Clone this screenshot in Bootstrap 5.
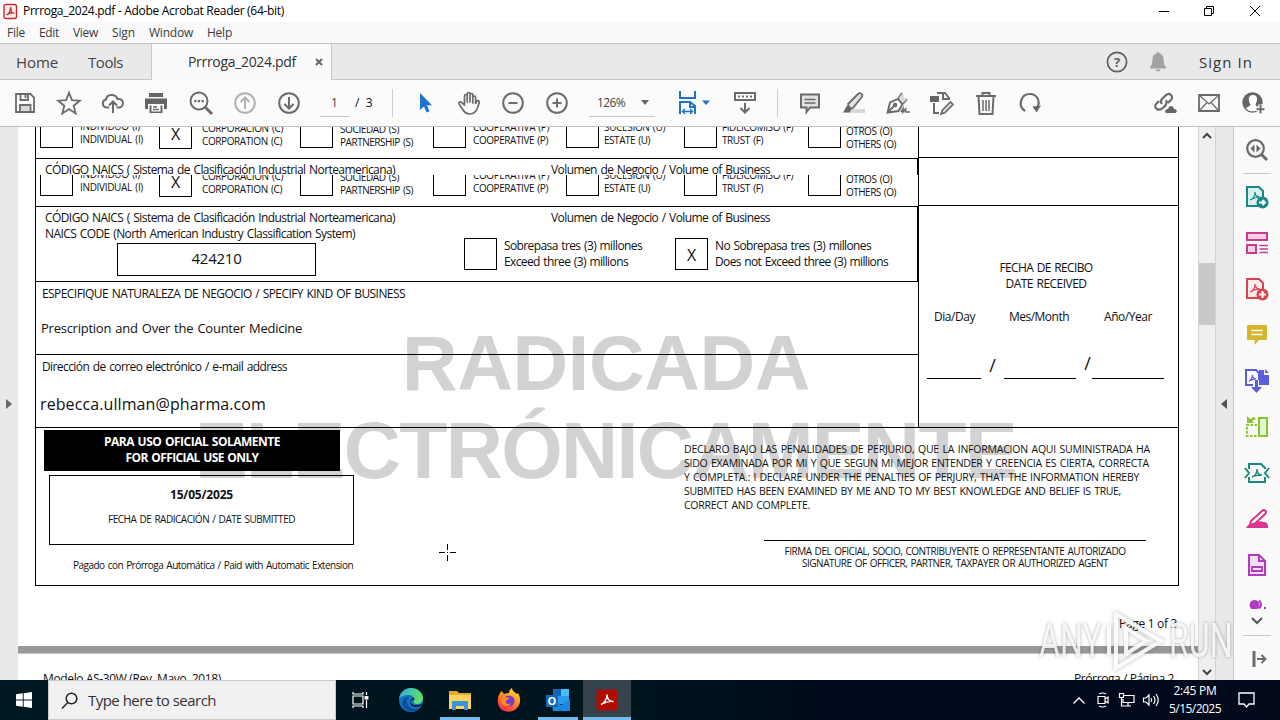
<!DOCTYPE html>
<html lang="en">
<head>
    <meta charset="UTF-8">
    <meta name="viewport" content="width=device-width, initial-scale=1.0">
    <title>Prrroga_2024.pdf - Adobe Acrobat Reader (64-bit)</title>

    <!-- Bootstrap CSS -->
    <link rel="stylesheet" href="https://cdn.jsdelivr.net/npm/bootstrap@5.3.0/dist/css/bootstrap.min.css">

    <style>
        body { width: 1280px; height: 720px; overflow: hidden; font-family: "Open Sans", "Noto Sans", sans-serif; font-size: 12px; line-height: 16px; color: #111; background: #fff; }
        svg { display: block; flex: none; overflow: visible; }
        .fit { display: inline-block; white-space: nowrap; }

        /* window chrome */
        .title-row { height: 22px; padding: 0 1px 0 3px; }
        .title-text { color: #000; margin-left: 5px; }
        .win-buttons { width: 138px; }
        .win-buttons > div { width: 45.5px; }
        .menu-row { height: 22px; background: #f9f9f9; border-bottom: 1px solid #c4c4c4; padding: 1px 0 0 7px; color: #3c3c3c; }
        .tab-row { height: 36px; background: #e9e9e9; border-bottom: 1px solid #c8c8c8; font-size: 15px; color: #444; }
        .doc-tab { width: 181px; height: 36px; background: #fafafa; border-left: 1px solid #c8c8c8; border-right: 1px solid #c8c8c8; font-size: 14px; color: #333; }
        .tool-row { height: 47px; background: #fbfbfb; border-bottom: 1px solid #c0c0c0; padding-left: 3px; }
        .tool { width: 44px; height: 46px; display: flex; align-items: center; justify-content: center; flex: none; }
        .tool svg, .side-tool svg { fill: none; stroke: #6b6b6b; stroke-width: 2; }
        .tool-sep { width: 1px; height: 28px; background: #cfcfcf; flex: none; }
        .field-line { border-bottom: 1px solid #c6c6c6; height: 27px; line-height: 26px; color: #444; }

        /* viewer */
        .viewer { height: 553px; }
        .gutter { width: 18px; background: #e9e9e9; }
        .sheet { width: 1180px; height: 553px; position: relative; overflow: hidden; padding-left: 17px; background: #fff; flex: none; }
        .form-area { position: relative; z-index: 1; width: 1144px; height: 459px; border: 1px solid #000; border-top: 0; word-spacing: 1px; }
        .form-top { height: 301px; border-bottom: 1px solid #000; }
        .form-left { width: 882px; }
        .form-right { width: 260px; border-left: 1px solid #000; }
        .form-foot { width: 318px; flex: none; }
        .stamp { position: absolute; font-family: "Liberation Sans", Arial, sans-serif; font-weight: 700; color: #d2d2d2; white-space: nowrap; line-height: 80px; }
        .stamp-a { left: 384px; top: 196px; font-size: 77px; }
        .stamp-b { left: 177px; top: 284px; font-size: 79px; }
        .entity-strip { height: 32px; border-bottom: 1px solid #000; overflow: hidden; display: grid; grid-template-columns: 119px 141px 133px 133px 118px 124px 1fr; align-items: end; align-content: end; padding-left: 4px; font-size: 10px; line-height: 13px; }
        .tick-box { border: 1px solid #000; width: 33px; height: 32px; line-height: 32px; font-size: 16px; text-align: center; flex: none; }
        .entity-strip .tick-box { height: 36px; line-height: 41px; }
        .naics-peek { height: 16px; overflow: hidden; border-right: 1px solid #000; padding-top: 3px; }
        .naics-row { height: 75px; border-bottom: 1px solid #000; border-right: 1px solid #000; padding-top: 3px; }
        .naics-left { width: 428px; padding-left: 9px; }
        .code-box { width: 199px; height: 33px; border: 1px solid #000; margin: 1px 0 0 72px; font-size: 15px; line-height: 29px; text-align: center; }
        .naics-title { padding-left: 87px; }
        .kind-row { height: 73px; border-bottom: 1px solid #000; padding: 4px 0 0 6px; }
        .mail-row { padding: 4px 0 0 6px; }
        .cell-a { height: 31px; border-bottom: 1px solid #000; }
        .cell-b { height: 48px; border-bottom: 1px solid #000; }
        .write-line { border-bottom: 1px solid #000; height: 24px; }
        .official { width: 296px; height: 41px; background: #000; color: #fff; font-weight: 700; margin: 2px 0 0 8px; padding-top: 4px; }
        .date-box { width: 305px; height: 70px; border: 1px solid #000; margin: 4px 0 0 13px; padding-top: 11px; }
        .declare { font-size: 10.500px; line-height: 14px; margin: 14px 0 0 330px; height: 98px; }
        .sign { width: 382px; border-top: 1px solid #000; margin-left: 410px; font-size: 10px; line-height: 12px; padding-top: 4px; }
        .page-gap { height: 8px; margin: 14px 0 0 -17px; background: #999; border-bottom: 1px solid #c4c4c4; }
        .crosshair { position: absolute; left: 421px; top: 417px; z-index: 2; }
        .scroll-track { width: 18px; background: #efefef; border-left: 1px solid #d4d4d4; border-right: 1px solid #d4d4d4; }
        .scroll-thumb { height: 62px; background: #c9c9c9; }
        .gutter-right { width: 17px; background: #e9e9e9; padding-right: 2px; }
        .side-panel { width: 47px; background: #fafafa; border-left: 1px solid #c8c8c8; }
        .side-tool { height: 46px; display: flex; align-items: center; justify-content: center; }
        .side-sep { width: 28px; height: 1px; background: #c8c8c8; margin: 0 auto; }

        /* video overlay mark */
        .overlay-mark { position: absolute; left: 1039px; top: 608px; z-index: 5; width: 192px; height: 66px; color: rgba(255,255,255,.85); font-family: Roboto, sans-serif; font-size: 48px; line-height: 66px; text-shadow: 0 0 4px rgba(0,0,0,.35); }
        .overlay-mark svg { filter: drop-shadow(0 0 2px rgba(0,0,0,.3)); }
        .mark-word { width: 62px; }
        .mark-word span { display: inline-block; transform: scaleX(.67); transform-origin: left; }

        /* taskbar */
        .task-row { height: 40px; background: linear-gradient(90deg, #001820 0, #00141d 50%, #000a1c 65%, #020a1c 100%); color: #fff; }
        .task-search { width: 288px; background: #f1f1f1; border: 1px solid #c9c9c9; color: #333; font-size: 15px; padding-left: 12px; }
        .task-app { width: 49px; display: flex; align-items: center; justify-content: center; border-bottom: 3px solid transparent; padding-top: 3px; }
        .task-app.active { background: #35444c; border-color: #76b9ed; width: 48px; margin-left: .500px; }
        .task-line { width: 40px; border-color: #76b9ed; margin: 0 4.500px; }
        .task-tray { width: 24px; }
        .task-clock { width: 64px; font-size: 12px; line-height: 18px; text-align: center; }

        /* spacing of single elements */
        .menu-row .fit + .fit { margin-left: 14px; }
        #tabTools { margin-left: 30px; }
        .doc-tab { margin-left: 28px; }
        #tabName { margin-left: 36px; }
        #tabRight { margin-left: auto; padding-right: 27px; }
        #bell { margin-left: 21px; }
        #signIn { margin-left: 32px; color: #333; }
        #pageNo { width: 29px; margin-left: 9px; }
        #pageAll { width: 20px; margin-left: 6px; font-size: 12px; }
        #sepA { margin-left: 17px; }
        #arrowTool { margin-left: 11px; }
        #arrowTool + .tool { margin-left: -1px; }
        #zoomField { width: 66px; margin-left: 10px; padding: 0 6px 0 8px; }
        #fitTool { margin-left: 17px; }
        #fitTool + .tool { margin-left: 7px; }
        #sepB { margin-left: 10px; }
        #noteTool { margin-left: 10px; }
        #userTool { margin-right: 5px; }
        #volumeRow { margin-top: 12px; }
        #volumeRow .tick-box:nth-child(3) { margin-left: 33px; }
        .vol-text { margin-left: 7px; width: 138px; }
        #kindValue { font-size: 13px; margin: 18px 0 0 -1px; }
        #mailValue { font-size: 16px; line-height: 22px; margin: 18px 0 0 -2px; }
        #received { padding: 54px 5px 0 0; }
        #dateNames { padding: 17px 0 0 15px; gap: 34px; }
        #dateNames .fit:last-child { margin-left: 1px; }
        #dateLines { margin: 30px 0 0 8px; }
        #dateLines .write-line:nth-child(1) { width: 54px; }
        #dateLines .write-line:nth-child(3) { width: 72px; }
        #dateLines .write-line:nth-child(5) { width: 72px; }
        #dateLines span { width: 23px; text-align: center; font-size: 18px; line-height: 20px; }
        #dateLines span:nth-child(4) { width: 16px; padding-left: 7px; line-height: 17px; }
        #submitted { font-size: 10px; margin-top: 8px; }
        #paid { font-size: 10px; margin: 12px 0 0 37px; }
        #pageOf { padding: 30px 21px 0 0; }
        #nextPage { padding: 17px 24px 0 8px; }
        #scrollUp { margin-top: 6px; }
        #scrollUp + .scroll-thumb { margin-top: 125px; }
        #cutTool { margin-top: 12px; height: 9px; overflow: hidden; }
        #sideMore { margin-top: 9px; }
        #sideSep { margin-top: 11px; }
        #startKey { width: 48px; height: 40px; }
        #startKey svg { stroke: none; }
        #searchText { margin-left: 10px; }
        #taskView { margin-right: 1px; }
        #tray { padding-right: 25px; }
        #notify { margin-left: 11px; }
    </style>
</head>
<body class="d-flex flex-column">

    <!-- Title bar -->
    <div class="title-row d-flex align-items-center flex-shrink-0">
        <svg width="15" height="17" viewBox="0 0 15 17"><rect x="1" y="1.500" width="12.500" height="14" rx="2" fill="#fff0ee" stroke="#c9252d" stroke-width="1.400"/><path d="M3.500 12c2-1 3.800-4 3.800-6.500 0-1.500 1-1.200.7.300-.6 2.200 1 4.200 3.500 4.500-2.500-.8-5.500 0-8 1.700z" fill="none" stroke="#c9252d" stroke-width="1.200"/></svg>
        <span class="fit title-text" data-w="261">Prrroga_2024.pdf - Adobe Acrobat Reader (64-bit)</span>
        <div class="win-buttons d-flex ms-auto">
            <div class="d-flex justify-content-center"><svg width="12" height="12" fill="none" stroke="#000"><path d="M1 6.500h10"/></svg></div>
            <div class="d-flex justify-content-center"><svg width="12" height="12" fill="none" stroke="#000"><path d="M1.500 3.500h7v7h-7zM3.500 3V1.500h7v7H9"/></svg></div>
            <div class="d-flex justify-content-center"><svg width="12" height="12" fill="none" stroke="#000"><path d="M1 1l10 10M11 1L1 11"/></svg></div>
        </div>
    </div>

    <!-- Menu -->
    <div class="menu-row d-flex align-items-center flex-shrink-0">
        <span class="fit" data-w="18">File</span>
        <span class="fit" data-w="20">Edit</span>
        <span class="fit" data-w="25">View</span>
        <span class="fit" data-w="23">Sign</span>
        <span class="fit" data-w="44">Window</span>
        <span class="fit" data-w="25">Help</span>
    </div>

    <!-- Tabs -->
    <div class="tab-row d-flex align-items-center flex-shrink-0">
        <span class="fit ms-3" data-w="42">Home</span>
        <span class="fit" data-w="35" id="tabTools">Tools</span>
        <div class="doc-tab d-flex align-items-center">
            <span class="fit" data-w="108" id="tabName">Prrroga_2024.pdf</span>
            <svg width="8" height="8" class="ms-auto me-2" fill="none" stroke="#666" stroke-width="2"><path d="M1 1l6 6M7 1L1 7"/></svg>
        </div>
        <div class="d-flex align-items-center" id="tabRight">
            <svg width="22" height="22" viewBox="0 0 22 22" fill="none" stroke="#5e5e5e" stroke-width="1.700"><circle cx="11" cy="11" r="9.600"/><text x="11" y="15.500" text-anchor="middle" font-size="13" font-weight="700" fill="#5e5e5e" stroke="none">?</text></svg>
            <svg width="18" height="20" viewBox="0 0 18 20" fill="#a2a2a2" id="bell"><path d="M9 0c1 0 1.600.7 1.600 1.600 3 .8 4 3.300 4 6.400 0 4 .8 5.500 2.400 7v1.500H1V15c1.600-1.500 2.400-3 2.400-7 0-3.100 1-5.600 4-6.400C7.400.7 8 0 9 0zM6.500 17.500h5c0 1.200-1 2-2.500 2s-2.500-.8-2.500-2z"/></svg>
            <span class="fit" data-w="54" id="signIn">Sign In</span>
        </div>
    </div>

    <!-- Toolbar -->
    <div class="tool-row d-flex align-items-center flex-shrink-0">
        <div class="tool"><svg width="22" height="22" viewBox="0 0 22 22"><path d="M7 14h8.500v5H7z" fill="#d9d9d9" stroke="none"/><path stroke-width="1.800" d="M2 2h14.500L20 5.500V20H2zM6.500 2v6H14V2M6 20v-7h10.500v7M11.500 3v3"/></svg></div>
        <div class="tool"><svg width="24" height="24" viewBox="0 0 24 24"><path stroke-width="1.800" d="M12 1.800l2.900 7.400 7.900.5-6.100 5 2 7.700-6.700-4.300-6.700 4.300 2-7.700-6.100-5 7.900-.5z"/></svg></div>
        <div class="tool"><svg width="24" height="22" viewBox="0 0 24 22"><path d="M8 15.500H5.500A4 4 0 0 1 5 7.600C5.500 2 14.500 1 16.500 7c7-.5 7 8 1.500 8.500h-2.500M12 21V10M8 13.500l4-4 4 4"/></svg></div>
        <div class="tool"><svg width="24" height="22" viewBox="0 0 24 22"><path d="M4 1h14v4H4zM0 6.500h22V17h-3v-5H3v5H0zM4.500 13.500h13V21h-13z" fill="#666" stroke="none"/><path d="M6.500 13h9v6.500h-9z" fill="#fff" stroke="none"/><path stroke-width="1.300" d="M8 15h4M8 17.500h6"/></svg></div>
        <div class="tool"><svg width="24" height="24" viewBox="0 0 24 24"><circle cx="10" cy="10" r="8.500"/><path stroke-width="3" d="M16 16l7 7"/><path d="M5.300 9h2.200v2.200H5.300zM8.900 9h2.200v2.200H8.900zM12.500 9h2.200v2.200h-2.200z" fill="#666" stroke="none"/></svg></div>
        <div class="tool opacity-50"><svg width="22" height="22" viewBox="0 0 22 22"><circle cx="11" cy="11" r="9.800"/><path d="M11 17V6M6.500 10L11 5.500l4.500 4.500"/></svg></div>
        <div class="tool"><svg width="22" height="22" viewBox="0 0 22 22"><circle cx="11" cy="11" r="9.800"/><path d="M11 5v11M6.500 12l4.500 4.500 4.500-4.500"/></svg></div>
        <div class="field-line text-center" id="pageNo">1</div>
        <span id="pageAll" class="fit">/&nbsp; 3</span>
        <div class="tool-sep" id="sepA"></div>
        <div class="tool" id="arrowTool"><svg width="14" height="20" viewBox="0 0 14 20"><path d="M1 0v17l4-3.500 2.500 6 3-1.200-2.500-6H13z" fill="#1f73d0" stroke="none"/></svg></div>
        <div class="tool"><svg width="24" height="24" viewBox="0 0 24 24"><path stroke-width="1.700" stroke-linejoin="round" d="M7.500 14V5c0-2 2.700-2 2.700 0v6V3c0-2 2.800-2 2.800 0v8V4c0-2 2.800-2 2.800 0v8V6.500c0-2 2.800-2 2.800 0v6l1.200-2c1-1.500 3-.8 2.500.8-.5 2-1.500 4.500-2 6-1.500 4-3.500 5.700-7.300 5.700-4.500 0-6.300-2.500-8-5.500L2.200 13c-1-1.800 1.200-2.800 2.500-1.500z"/></svg></div>
        <div class="tool"><svg width="22" height="22" viewBox="0 0 22 22"><circle cx="11" cy="11" r="9.800"/><path d="M6.500 11h9"/></svg></div>
        <div class="tool"><svg width="22" height="22" viewBox="0 0 22 22"><circle cx="11" cy="11" r="9.800"/><path d="M6.500 11h9M11 6.500v9"/></svg></div>
        <div class="field-line d-flex align-items-center" id="zoomField"><span class="fit" data-w="28">126%</span><svg class="ms-auto" width="8" height="5"><path d="M0 0h8L4 5z" fill="#666"/></svg></div>
        <div class="tool" id="fitTool"><svg width="32" height="24" viewBox="0 0 32 24"><path style="stroke:#1f73c8" d="M2 0v7h15V0M2 23V11h10l5 4v8M12 11v5h5"/><path style="stroke:#1f73c8" stroke-width="1.500" d="M5 20.500h9M7 18l-2.500 2.500L7 23M12 18l2.500 2.500L12 23"/><path d="M24 9.500h8L28 14z" fill="#1f73c8" stroke="none"/></svg></div>
        <div class="tool"><svg width="22" height="22" viewBox="0 0 22 22"><path d="M1 1h20v7H1zM11 11v9M6.500 16l4.500 4.500 4.500-4.500"/><path stroke-dasharray="2 2" d="M4 4.500h14"/></svg></div>
        <div class="tool-sep" id="sepB"></div>
        <div class="tool" id="noteTool"><svg width="22" height="22" viewBox="0 0 22 22"><path fill="#e2e2e2" d="M2 2.500h18v13h-9L7.500 20v-4.500H2z"/><path stroke-width="1.500" d="M5.500 7.500h11M5.500 11h11"/></svg></div>
        <div class="tool"><svg width="24" height="22" viewBox="0 0 24 22"><path d="M10 17h13v4H4z" fill="#d8d8d8" stroke="none"/><path fill="#e2e2e2" stroke-width="1.800" d="M6 12L16 2c2-2 5.500 0 3.800 3L11 16c-2 1-5-1-5-4z"/><path d="M5 13.500l4.500 4-2 3H1z" fill="#666" stroke="none"/></svg></div>
        <div class="tool"><svg width="24" height="22" viewBox="0 0 24 22"><path stroke-width="1.900" d="M1.500 20.500L4 10.500l8-3.500 4.500 5-4 7zM1.500 20.500l6-6M12 7l4-6M16.500 12L21 7"/><path d="M13 5.500L17 1l1 5 3 1-4 4z" fill="#d8d8d8" stroke="none"/><circle cx="9" cy="13" r="1.300"/><path stroke-width="1.600" d="M15 20l2-3.500v3.500l2.500-3v3H24"/></svg></div>
        <div class="tool"><svg width="24" height="23" viewBox="0 0 24 23"><path d="M4 11v10h5M7 1h8l4 5v2M13 1v6h6"/><path d="M0 4h9v6H0z" fill="#666" stroke="none"/><path fill="#e2e2e2" stroke-width="1.700" d="M11 22l1.500-4 8-8 2.500 2.500-8 8z"/></svg></div>
        <div class="tool"><svg width="20" height="23" viewBox="0 0 20 23"><path d="M0 4h20M6.500 3.500V1h7v2.500M2.500 4.500l1 17.500h13l1-17.500"/><path stroke-width="1.500" d="M7 8v11M10 8v11M13 8v11"/></svg></div>
        <div class="tool"><svg width="22" height="22" viewBox="0 0 22 22"><path stroke-width="2.200" d="M6 19C-1.500 14 1.500 2 11 2c7 0 10.500 7 7.500 13"/><path d="M13.500 14.500l8.500-1-4.500 7z" fill="#666" stroke="none"/></svg></div>
        <div class="tool ms-auto"><svg width="24" height="22" viewBox="0 0 24 22"><path stroke-width="2.200" d="M9 12c-3-3 1-6 3-8s4-3 6-1 1 4-1 6l-2 2M13 8c2 3 0 5-2 7s-4 4-7 2-2-4 0-6l2-2"/><path d="M13 21c-2-2 0-4 2-4 1-4 5-4 6 0 4 0 3 4 1 4z" fill="#666" stroke="none"/></svg></div>
        <div class="tool"><svg width="22" height="18" viewBox="0 0 22 18"><path stroke-width="1.800" d="M1 1h20v16H1z"/><path stroke-width="1.300" d="M2 2l9 8 9-8M2 16l7-7.500M20 16l-7-7.500"/></svg></div>
        <div class="tool" id="userTool"><svg width="22" height="22" viewBox="0 0 22 22"><circle cx="10.500" cy="10.500" r="10.200" fill="#666" stroke="none"/><path d="M11 3c3 0 4.300 2 4 4.800-.2 2.500-1.200 3.500-1.500 4.700 0 2 3.500 2 4 4-3.500 3.500-10 4-13.500 0 1-2 4.500-2 4.500-4-.5-1-1.500-2.200-1.700-4.700C6.500 5 8 3 11 3z" fill="#fff" stroke="none"/><path style="stroke:#fff" stroke-width="4.500" d="M18.500 12.500v9M14 17h9"/><path d="M18.500 13v8.500M14.500 17.200h8"/></svg></div>
    </div>

    <!-- Viewer -->
    <div class="viewer d-flex flex-shrink-0">
        <div class="gutter d-flex align-items-center justify-content-center"><svg width="6" height="10"><path d="M0 0v10l6-5z" fill="#666"/></svg></div>
        <div class="sheet">
            <div class="stamp stamp-a"><span class="fit" data-w="408">RADICADA</span></div>
            <div class="stamp stamp-b"><span class="fit" data-w="821">ELECTRÓNICAMENTE</span></div>

            <div class="form-area">
                <div class="form-top d-flex">
                    <div class="form-left">
                        <div class="entity-strip"></div>
                        <div class="naics-peek d-flex">
                            <div class="naics-left"><span class="fit" data-w="350">CÓDIGO NAICS ( Sistema de Clasificación Industrial Norteamericana)</span></div>
                            <div class="naics-title"><span class="fit" data-w="219">Volumen de Negocio / Volume of Business</span></div>
                        </div>
                        <div class="entity-strip"></div>
                        <div class="naics-row d-flex">
                            <div class="naics-left">
                                <div><span class="fit" data-w="350">CÓDIGO NAICS ( Sistema de Clasificación Industrial Norteamericana)</span></div>
                                <div><span class="fit" data-w="310">NAICS CODE (North American Industry Classification System)</span></div>
                                <div class="code-box"><span class="fit" data-w="50">424210</span></div>
                            </div>
                            <div>
                                <div class="naics-title"><span class="fit" data-w="219">Volumen de Negocio / Volume of Business</span></div>
                                <div class="d-flex" id="volumeRow">
                                    <div class="tick-box"></div>
                                    <div class="vol-text"><div><span class="fit" data-w="138">Sobrepasa tres (3) millones</span></div><div><span class="fit" data-w="124">Exceed three (3) millions</span></div></div>
                                    <div class="tick-box">X</div>
                                    <div class="vol-text"><div><span class="fit" data-w="156">No Sobrepasa tres (3) millones</span></div><div><span class="fit" data-w="173">Does not Exceed three (3) millions</span></div></div>
                                </div>
                            </div>
                        </div>
                        <div class="kind-row">
                            <div><span class="fit" data-w="363">ESPECIFIQUE NATURALEZA DE NEGOCIO / SPECIFY KIND OF BUSINESS</span></div>
                            <div id="kindValue"><span class="fit" data-w="261">Prescription and Over the Counter Medicine</span></div>
                        </div>
                        <div class="mail-row">
                            <div><span class="fit" data-w="245">Dirección de correo electrónico / e-mail address</span></div>
                            <div id="mailValue"><span class="fit" data-w="226">rebecca.ullman@pharma.com</span></div>
                        </div>
                    </div>
                    <div class="form-right">
                        <div class="cell-a"></div>
                        <div class="cell-b"></div>
                        <div class="text-center" id="received">
                            <div><span class="fit" data-w="93">FECHA DE RECIBO</span></div>
                            <div><span class="fit" data-w="81">DATE RECEIVED</span></div>
                        </div>
                        <div class="d-flex" id="dateNames">
                            <span class="fit" data-w="41">Dia/Day</span>
                            <span class="fit" data-w="60">Mes/Month</span>
                            <span class="fit" data-w="48">Año/Year</span>
                        </div>
                        <div class="d-flex" id="dateLines">
                            <div class="write-line"></div><span>/</span><div class="write-line"></div><span>/</span><div class="write-line"></div>
                        </div>
                    </div>
                </div>
                <div class="d-flex">
                    <div class="form-foot">
                        <div class="official text-center">
                            <div><span class="fit" data-w="176">PARA USO OFICIAL SOLAMENTE</span></div>
                            <div><span class="fit" data-w="133">FOR OFFICIAL USE ONLY</span></div>
                        </div>
                        <div class="date-box text-center">
                            <div class="fw-bold"><span class="fit" data-w="63">15/05/2025</span></div>
                            <div id="submitted"><span class="fit" data-w="187">FECHA DE RADICACIÓN / DATE SUBMITTED</span></div>
                        </div>
                        <div id="paid"><span class="fit" data-w="280">Pagado con Prórroga Automática / Paid with Automatic Extension</span></div>
                    </div>
                    <div>
                        <div class="declare">
                            <div><span class="fit" data-w="466">DECLARO BAJO LAS PENALIDADES DE PERJURIO, QUE LA INFORMACION AQUI SUMINISTRADA HA</span></div>
                            <div><span class="fit" data-w="465">SIDO EXAMINADA POR MI Y QUE SEGUN MI MEJOR ENTENDER Y CREENCIA ES CIERTA, CORRECTA</span></div>
                            <div><span class="fit" data-w="455">Y COMPLETA.: I DECLARE UNDER THE PENALTIES OF PERJURY, THAT THE INFORMATION HEREBY</span></div>
                            <div><span class="fit" data-w="437">SUBMITED HAS BEEN EXAMINED BY ME AND TO MY BEST KNOWLEDGE AND BELIEF IS TRUE,</span></div>
                            <div><span class="fit" data-w="126">CORRECT AND COMPLETE.</span></div>
                        </div>
                        <div class="sign text-center">
                            <div><span class="fit" data-w="341">FIRMA DEL OFICIAL, SOCIO, CONTRIBUYENTE O REPRESENTANTE AUTORIZADO</span></div>
                            <div><span class="fit" data-w="306">SIGNATURE OF OFFICER, PARTNER, TAXPAYER OR AUTHORIZED AGENT</span></div>
                        </div>
                    </div>
                </div>
            </div>
            <div class="text-end" id="pageOf"><span class="fit" data-w="58">Page 1 of 3</span></div>
            <div class="page-gap"></div>
            <div class="d-flex justify-content-between" id="nextPage">
                <span class="fit" data-w="178">Modelo AS-30W (Rev. Mayo, 2018)</span>
                <span class="fit" data-w="100">Prórroga / Página 2</span>
            </div>
            <svg class="crosshair" width="17" height="17" stroke="#000" stroke-width="1"><path d="M0 8.500h6M11 8.500h6M8.500 0v6M8.500 11v6M8 8.500h1"/></svg>
        </div>
        <div class="scroll-track d-flex flex-column">
            <svg class="mx-auto" width="8" height="5" fill="none" stroke="#444" stroke-width="2" id="scrollUp"><path d="M0 5l4-4 4 4"/></svg>
            <div class="scroll-thumb"></div>
            <svg class="mx-auto mt-auto mb-1" width="8" height="6" fill="none" stroke="#444" stroke-width="2"><path d="M0 0l4 4 4-4"/></svg>
        </div>
        <div class="gutter-right d-flex align-items-center justify-content-center"><svg width="6" height="10"><path d="M6 0v10L0 5z" fill="#555"/></svg></div>
        <div class="side-panel">
            <div class="side-tool"><svg width="22" height="22" viewBox="0 0 22 22"><circle cx="9.500" cy="9.500" r="8.300" stroke-width="2.200"/><path stroke-width="3" d="M15.500 15.500L21 21"/><path d="M8.500 5.500v8l-4-4zM10.500 5.500v8l4-4z" fill="#666" stroke="none"/></svg></div>
            <div class="side-sep"></div>
            <div class="side-tool"><svg width="24" height="24" viewBox="0 0 24 24"><path style="stroke:#168a82" fill="#d8f2f0" d="M2 2h12l4 4v15H2z"/><path style="stroke:#168a82" stroke-width="1.200" d="M5 15c3-1 5-4 5-8 0 4 2 5 5 5-4 0-7 1-10 3z"/><circle cx="17.500" cy="17.500" r="6" fill="#168a82" stroke="none"/><path style="stroke:#fff" d="M14 17.500h6M17.500 15l2.500 2.500-2.500 2.500"/></svg></div>
            <div class="side-tool"><svg width="22" height="22" viewBox="0 0 22 22"><path style="stroke:#c83c8e" fill="#f7cfe6" d="M1 1h20v7H1zM1 13h9v8H1z"/><path style="stroke:#c83c8e" stroke-width="1.300" d="M13.500 13.500H22M13.500 17H22M13.500 20.500H22"/></svg></div>
            <div class="side-tool"><svg width="24" height="24" viewBox="0 0 24 24"><path style="stroke:#d7444d" fill="#fdebe9" d="M2 2h12l4 4v15H2z"/><path style="stroke:#d7444d" stroke-width="1.200" d="M5 15c3-1 5-4 5-8 0 4 2 5 5 5-4 0-7 1-10 3z"/><circle cx="17.500" cy="17.500" r="6" fill="#d7444d" stroke="none"/><path style="stroke:#fff" d="M14 17.500h7M17.500 14v7"/></svg></div>
            <div class="side-tool"><svg width="20" height="20" viewBox="0 0 20 20"><path d="M1 0h18q1 0 1 1v13q0 1-1 1h-7l-4.500 5v-5H1q-1 0-1-1V1q0-1 1-1z" fill="#d6b62c" stroke="none"/><path style="stroke:#fff" stroke-width="1.600" d="M4.500 5.500h11M4.500 9.500h11"/></svg></div>
            <div class="side-tool"><svg width="24" height="24" viewBox="0 0 24 24"><path style="stroke:#5c5ce0" d="M8 16H1V1h10l3 3v7"/><path style="stroke:#5c5ce0" stroke-width="1.200" d="M4 12c2-1 3.500-3 3.500-6 0 3 1.500 4 3.500 4-3 0-5 1-7 2z"/><path d="M14 1h5v5h5v10H14zM20 0l4 4h-4zM10 11h3v7h4l-5.500 6L6 18h4z" fill="#5c5ce0" stroke="none"/></svg></div>
            <div class="side-tool"><svg width="22" height="22" viewBox="0 0 22 22"><path style="stroke:#86c232" fill="#e6f5d2" d="M13 2h8v18h-8z"/><path style="stroke:#86c232" stroke-dasharray="2.500 1.500" d="M11 9H1v11h10"/><path d="M1 0v7h7L6 5l4-2-2-2-4 2z" fill="#86c232" stroke="none"/></svg></div>
            <div class="side-tool"><svg width="24" height="22" viewBox="0 0 24 22"><path style="stroke:#168a82" d="M4 7V2h12l4 4v1M4 15v5h16v-5M0 6l4 5-4 5M24 6l-4 5 4 5"/><path style="stroke:#168a82" stroke-width="1.400" d="M7 15c3-1 5-4 5-8 0 4 2 6 5 6-4 0-7 0-10 2z"/></svg></div>
            <div class="side-tool"><svg width="22" height="20" viewBox="0 0 22 20"><path d="M0 19c3-6 9-4 10-5s4-3 7-1c4 0 5 1 5 6z" fill="#d83790" stroke="none"/><path style="stroke:#d83790" fill="#fff" d="M5 12L16 2c2-2 5 0 3.500 2.500L9 14.500 4 16z"/></svg></div>
            <div class="side-tool"><svg width="18" height="22" viewBox="0 0 18 22"><path style="stroke:#b13bc0" fill="#f5dcf7" d="M1 1h10l6 6v14H1zM11 1v6h6"/><path style="stroke:#b13bc0" stroke-width="1.800" d="M4 13h10v4H4z"/></svg></div>
            <div id="cutTool" class="d-flex justify-content-center"><svg width="17" height="9" viewBox="0 0 17 9"><circle cx="5.500" cy="5" r="5" fill="#b13bc0"/><path d="M10 .500q4 4 0 8" fill="none" stroke="#b13bc0" stroke-width="2"/><path d="M15 7h2v2h-2z" fill="#b13bc0"/></svg></div>
            <svg class="mx-auto" id="sideMore" width="12" height="6" fill="none" stroke="#555" stroke-width="2"><path d="M1 0l5 5 5-5"/></svg>
            <div class="side-sep" id="sideSep"></div>
            <div class="side-tool ps-1"><svg width="15" height="16" viewBox="0 0 15 16"><path stroke-width="3" d="M2 0v16"/><path d="M5 8h8M9.500 4l4 4-4 4"/></svg></div>
        </div>
    </div>

    <!-- Taskbar -->
    <div class="task-row d-flex flex-shrink-0">
        <div class="tool" id="startKey"><svg width="16" height="16" viewBox="0 0 16 16"><path d="M0 2.300l6.800-1v6.300H0zM7.700 1.200L16 0v7.600H7.700zM0 8.500h6.800v6.300L0 13.800zM7.700 8.500H16V16l-8.300-1.200z" fill="#fff"/></svg></div>
        <div class="task-search d-flex align-items-center">
            <svg width="17" height="17" fill="none" stroke="#222" stroke-width="1.500"><circle cx="10.500" cy="6.500" r="5.300"/><path d="M6.800 10.500L1 16.500"/></svg>
            <span class="fit" data-w="128" id="searchText">Type here to search</span>
        </div>
        <div class="task-app" id="taskView"><svg width="17" height="16" fill="none" stroke="#fff" stroke-width="1.200"><path d="M1 4h10v8H1zM1 0v2h10V0M1 16v-2h10v2M14.500 0v3M14.500 8v8"/><path d="M13.200 4.500h2.600v2.500h-2.600z" fill="#fff"/></svg></div>
        <div class="task-app"><svg width="24" height="24" viewBox="0 0 24 24"><defs><linearGradient id="edgeA" x1="0" y1="0" x2="1" y2=".3"><stop offset="0" stop-color="#2aa9e0"/><stop offset="1" stop-color="#5fe06a"/></linearGradient></defs><circle cx="12" cy="12" r="12" fill="#1272c4"/><path d="M0 11C1 4 6 0 12 0c7 0 12 5 12 10 0 4-3 6-6 6s-4-1-3-3c1-3-1-6-5-6-5 0-9 2-10 4z" fill="url(#edgeA)"/><path d="M8 12c-1 6 4 9 9 9 2 0 4-1 5-2-4 6-13 6-17 1-4-6 0-12 5-11-1 1-2 2-2 3z" fill="#0b4f9c"/><path d="M11 12c0 5 5 6.500 10 4.500l2-.5c-2 4-11 4-12-1 0-3 2-5 4-5 2 2-2 1-2 2.500z" fill="#001820"/></svg></div>
        <div class="task-app task-line"><svg width="22" height="20" viewBox="0 0 22 20"><path d="M0 1h8l2 2h12v16H0z" fill="#e9a928"/><path d="M0 5h22v14H0z" fill="#ffd45e"/><path d="M3 11h16v9h-4v-4H7v4H3z" fill="#3e94d8"/></svg></div>
        <div class="task-app"><svg width="24" height="24" viewBox="0 0 24 24"><defs><linearGradient id="foxA" x1=".8" y1="0" x2=".3" y2="1"><stop offset="0" stop-color="#ffe23c"/><stop offset=".5" stop-color="#ff8a1c"/><stop offset="1" stop-color="#f5294f"/></linearGradient></defs><path d="M3 5l1.500-2 2.500 3c2-1 4-1 5-1 0-2 1-4 3-5 0 3 3 4 5 6l1-1c3 5 3 11-1 15-4 5-13 5-17 0-3-4-3-11 0-15z" fill="url(#foxA)"/><circle cx="12" cy="13" r="5.500" fill="#6a3fd0"/><path d="M5 9c3-1 5 1 8 1-1 2-4 1-4 4 0 2 3 3 5 1-1 4-8 4-10-1z" fill="#ff8a1c"/></svg></div>
        <div class="task-app task-line"><svg width="24" height="24" viewBox="0 0 24 24"><path d="M7 1h16v15H7z" fill="#2a9be8"/><path d="M7 1h8v7H7z" fill="#1066b5"/><path d="M15 1h8v7h-8z" fill="#42c0f5"/><path d="M5 11l10 6 9-6v12H7z" fill="#1c86d8"/><path d="M0 7h12v12H0z" fill="#0f6cbd"/><text x="6" y="17" text-anchor="middle" font-size="11" font-weight="700" fill="#fff">O</text></svg></div>
        <div class="task-app active"><svg width="22" height="22" viewBox="0 0 22 22"><rect width="21" height="21" x=".5" y=".5" rx="3" fill="#b30b00"/><path d="M5 15.500c3-1 6-5 6-10 0 5 2.500 7 6.500 7-4-.5-9 1-12.500 3z" fill="none" stroke="#fff" stroke-width="1.400"/></svg></div>
        <div class="d-flex align-items-center ms-auto" id="tray">
            <div class="task-tray d-flex justify-content-center"><svg width="12" height="7" fill="none" stroke="#fff" stroke-width="1.300"><path d="M.5 6.500L6 1l5.500 5.500"/></svg></div>
            <div class="task-tray d-flex justify-content-center"><svg width="12" height="16" fill="none" stroke="#fff" stroke-width="1.200"><path d="M1 4.500h7v7H1zM8 7l3-2v6L8 9M2 2q3.500-2 7 0M2 14q3.500 2 7 0"/></svg></div>
            <div class="task-tray d-flex justify-content-center"><svg width="16" height="14" fill="none" stroke="#fff" stroke-width="1.200"><path d="M5 2.500h10v7H4V6M4 13h8M9 9.500V13M.5.500h4v4h-4zM2.500 4.500V13H5"/></svg></div>
            <div class="task-tray d-flex justify-content-center"><svg width="16" height="14" fill="none" stroke="#fff" stroke-width="1.200"><path d="M.500 5h2.500l3-3v10L3 9H.500zM8 5q1.500 2 0 4M10.500 3q3 4 0 8M13 1q4.500 6 0 12"/></svg></div>
            <div class="task-clock"><div><span class="fit" data-w="43">2:45 PM</span></div><div><span class="fit" data-w="52">5/15/2025</span></div></div>
            <svg id="notify" width="17" height="16" fill="none" stroke="#fff" stroke-width="1.300"><path d="M1 1h15v11h-5l-2.500 3L6 12H1z"/></svg>
        </div>
    </div>

    <div class="overlay-mark d-flex align-items-center justify-content-between">
        <div class="mark-word"><span>ANY</span></div>
        <svg width="58" height="60" viewBox="0 0 58 60" fill="none" stroke="rgba(255,255,255,.9)" stroke-width="4"><path d="M10 14V3l45 27-45 27V44M20 17l20 13-20 13zM3 14v30M10 14v30"/></svg>
        <div class="mark-word"><span>RUN</span></div>
    </div>

    <script>
        const entities = [
            { es: "INDIVIDUO (I)", en: "INDIVIDUAL (I)", w: [60, 63], gap: 7, up: 12, mark: "" },
            { es: "CORPORACIÓN (C)", en: "CORPORATION (C)", w: [81, 80], gap: 10, up: 10, mark: "X" },
            { es: "SOCIEDAD (S)", en: "PARTNERSHIP (S)", w: [59, 73], gap: 7, up: 9, mark: "" },
            { es: "COOPERATIVA (P)", en: "COOPERATIVE (P)", w: [76, 75], gap: 7, up: 11, mark: "" },
            { es: "SUCESIÓN (U)", en: "ESTATE (U)", w: [61, 46], gap: 5, up: 11, mark: "" },
            { es: "FIDEICOMISO (F)", en: "TRUST (F)", w: [71, 41], gap: 5, up: 11, mark: "" },
            { es: "OTROS (O)", en: "OTHERS (O)", w: [46, 50], gap: 5, up: 7, mark: "" },
        ];

        document.querySelectorAll(".entity-strip").forEach(strip => {
            strip.innerHTML = entities.map(e => `
                <div class="d-flex align-items-end">
                    <div class="tick-box" style="margin-bottom:${e.mark ? 9 : 10}px">${e.mark}</div>
                    <div style="margin:0 0 ${e.up}px ${e.gap}px">
                        <div><span class="fit" data-w="${e.w[0]}">${e.es}</span></div>
                        <div><span class="fit" data-w="${e.w[1]}">${e.en}</span></div>
                    </div>
                </div>`).join("");
        });

        // Track each label so it fills its printed width
        document.querySelectorAll(".fit[data-w]").forEach(el => {
            const range = document.createRange();
            range.selectNodeContents(el);
            const width = range.getBoundingClientRect().width;
            el.style.letterSpacing = ((el.dataset.w - width) / el.textContent.length) + "px";
        });
    </script>

    <!-- Bootstrap JS -->
    <script src="https://cdn.jsdelivr.net/npm/bootstrap@5.3.0/dist/js/bootstrap.bundle.min.js"></script>

</body>
</html>
